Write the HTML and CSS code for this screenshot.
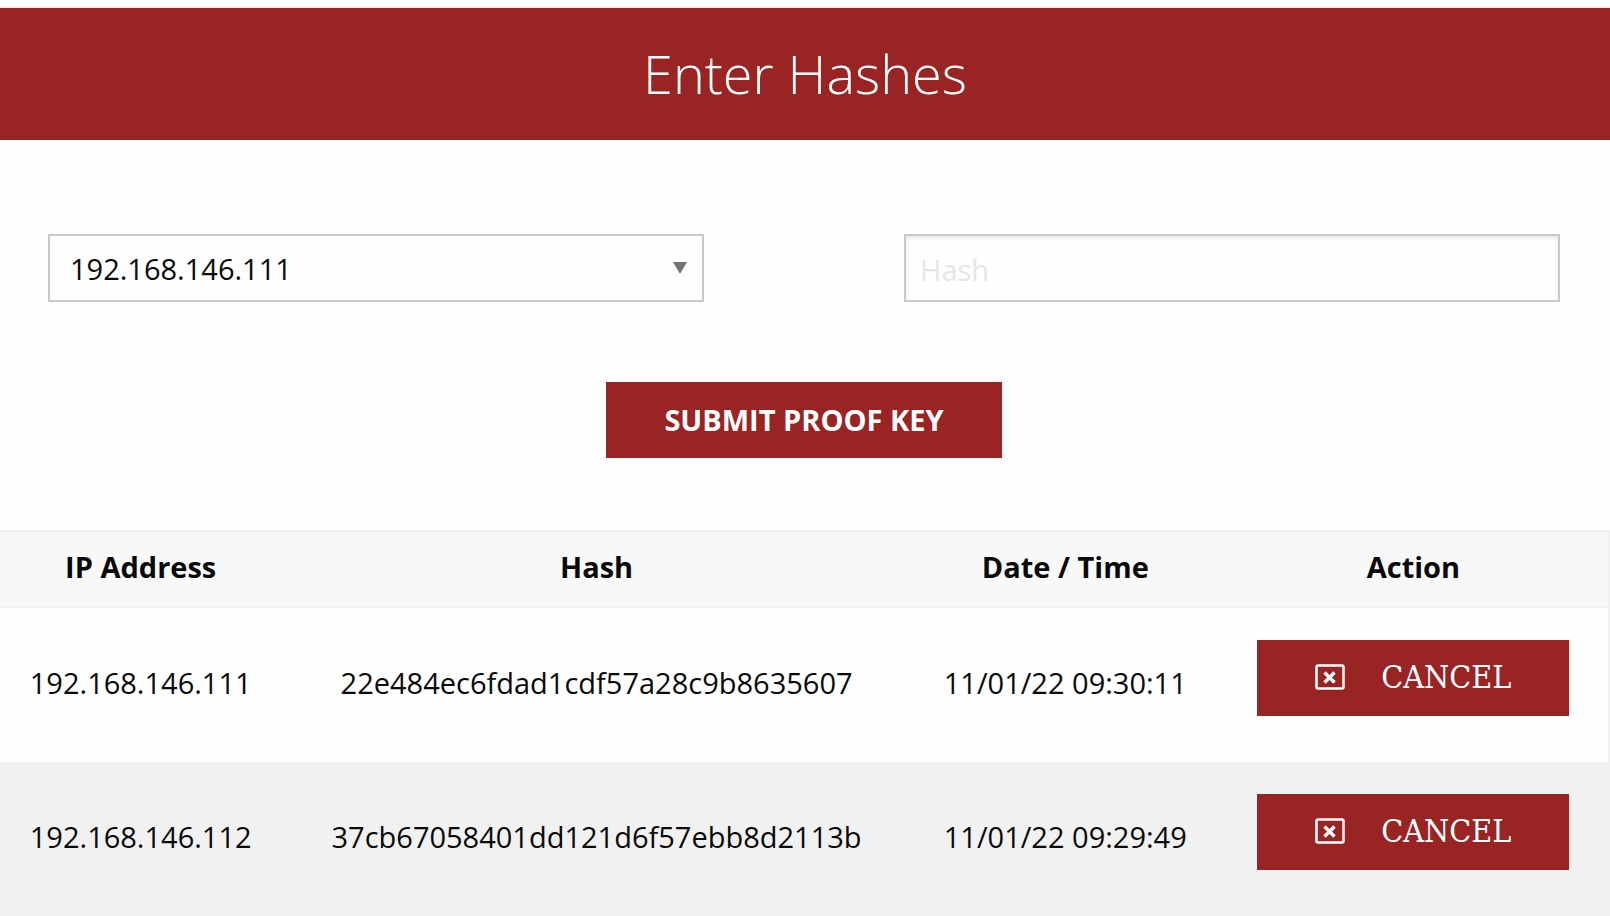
FILE: index.html
```
<!DOCTYPE html>
<html lang="en">
<head>
    <meta charset="utf-8">
    <meta name="viewport" content="width=device-width, initial-scale=1.0">
    <title>Enter Hashes</title>
    <link rel="stylesheet" href="styles.css">
</head>
<body>
    <header class="page-title">
        <h1>Enter Hashes</h1>
    </header>

    <form class="hash-form">
        <div class="fields">
            <select class="field" name="ip" aria-label="IP Address">
                <option>192.168.146.111</option>
                <option>192.168.146.112</option>
            </select>
            <input class="field" type="text" name="hash" placeholder="Hash" aria-label="Hash">
        </div>
        <button class="button submit" type="submit">SUBMIT PROOF KEY</button>
    </form>

    <table class="hashes">
        <thead>
            <tr>
                <th class="col-ip">IP Address</th>
                <th class="col-hash">Hash</th>
                <th class="col-date">Date / Time</th>
                <th class="col-action">Action</th>
            </tr>
        </thead>
        <tbody>
            <tr>
                <td>192.168.146.111</td>
                <td>22e484ec6fdad1cdf57a28c9b8635607</td>
                <td>11/01/22 09:30:11</td>
                <td>
                    <button class="button cancel" type="button">
                        <svg class="icon" viewBox="0 0 30 26" aria-hidden="true">
                            <rect x="1.5" y="1.5" width="27" height="23" rx="1.5" fill="none" stroke="#fff" stroke-width="2.5"/>
                            <path d="M9.5 8.5l10 10M19.5 8.5l-10 10" stroke="#fff" stroke-width="3.4"/>
                        </svg>
                        <span>CANCEL</span>
                    </button>
                </td>
            </tr>
            <tr>
                <td>192.168.146.112</td>
                <td>37cb67058401dd121d6f57ebb8d2113b</td>
                <td>11/01/22 09:29:49</td>
                <td>
                    <button class="button cancel" type="button">
                        <svg class="icon" viewBox="0 0 30 26" aria-hidden="true">
                            <rect x="1.5" y="1.5" width="27" height="23" rx="1.5" fill="none" stroke="#fff" stroke-width="2.5"/>
                            <path d="M9.5 8.5l10 10M19.5 8.5l-10 10" stroke="#fff" stroke-width="3.4"/>
                        </svg>
                        <span>CANCEL</span>
                    </button>
                </td>
            </tr>
        </tbody>
    </table>
</body>
</html>
```
FILE: styles.css
```
* {
    box-sizing: border-box;
}

body {
    margin: 0;
    padding-top: 6px;
    background: #fefefe;
    color: #0a0a0a;
    font-family: "Open Sans", sans-serif;
    font-size: 29px;
    line-height: 42px;
}

/* Title bar */
.page-title {
    padding: 26px 0 28px;
    border-top: 2px solid #f1f1f1;
    background: #9a2324;
    color: #fff;
    text-align: center;
}

.page-title h1 {
    margin: 0;
    font-size: 54px;
    font-weight: 300;
    line-height: 78px;
}

/* Hash form */
.hash-form {
    padding: 94px 50px 72px 48px;
    text-align: center;
}

.fields {
    display: grid;
    grid-template-columns: 1fr 1fr;
    column-gap: 200px;
    margin-bottom: 80px;
}

.field {
    width: 100%;
    height: 68px;
    padding: 2px 14px 0;
    border: 2px solid #cacaca;
    border-radius: 0;
    background: #fefefe;
    color: #0a0a0a;
    font: inherit;
}

select.field {
    padding: 2px 20px 0;
    appearance: none;
    background-image: url("data:image/svg+xml,%3Csvg xmlns='http://www.w3.org/2000/svg' width='14' height='12'%3E%3Cpath d='M0 0h14L7 12z' fill='%23737373'/%3E%3C/svg%3E");
    background-repeat: no-repeat;
    background-position: right 15px center;
}

input.field {
    box-shadow: inset 0 2px 4px rgba(10, 10, 10, 0.1);
}

input.field::placeholder {
    color: #e6e6e6;
    opacity: 1;
}

/* Buttons */
.button {
    height: 76px;
    border: 0;
    background: #9a2324;
    color: #fff;
    font: inherit;
    cursor: pointer;
}

.button:hover {
    background: #831e1f;
}

.submit {
    display: block;
    margin: 0 auto;
    padding: 0 58px;
    font-weight: 700;
}

.cancel {
    display: flex;
    align-items: center;
    justify-content: space-between;
    width: 312px;
    margin: 0 auto 14px;
    padding: 0 58px 2px;
    font-family: "DejaVu Serif Condensed", "DejaVu Serif", serif;
    font-size: 32px;
}

.icon {
    width: 30px;
    height: 26px;
}

/* Submitted hashes */
.hashes {
    width: 100%;
    border-collapse: separate;
    border-spacing: 0;
    border-right: 2px solid #f1f1f1;
    table-layout: fixed;
}

.hashes th {
    padding: 14px 0 18px;
    border-top: 2px solid #f1f1f1;
    border-bottom: 2px solid #f1f1f1;
    background: #f8f8f8;
    font-weight: 700;
}

.hashes td {
    padding: 32px 0 36px;
    text-align: center;
}

.hashes td:last-child {
    padding-bottom: 32px;
}

.hashes tbody tr:nth-child(even) {
    background: #f1f1f1;
}

.col-ip { width: 17.5%; }
.col-hash { width: 39.2%; }
.col-date { width: 19.1%; }
.col-action { width: 24.2%; }
```
